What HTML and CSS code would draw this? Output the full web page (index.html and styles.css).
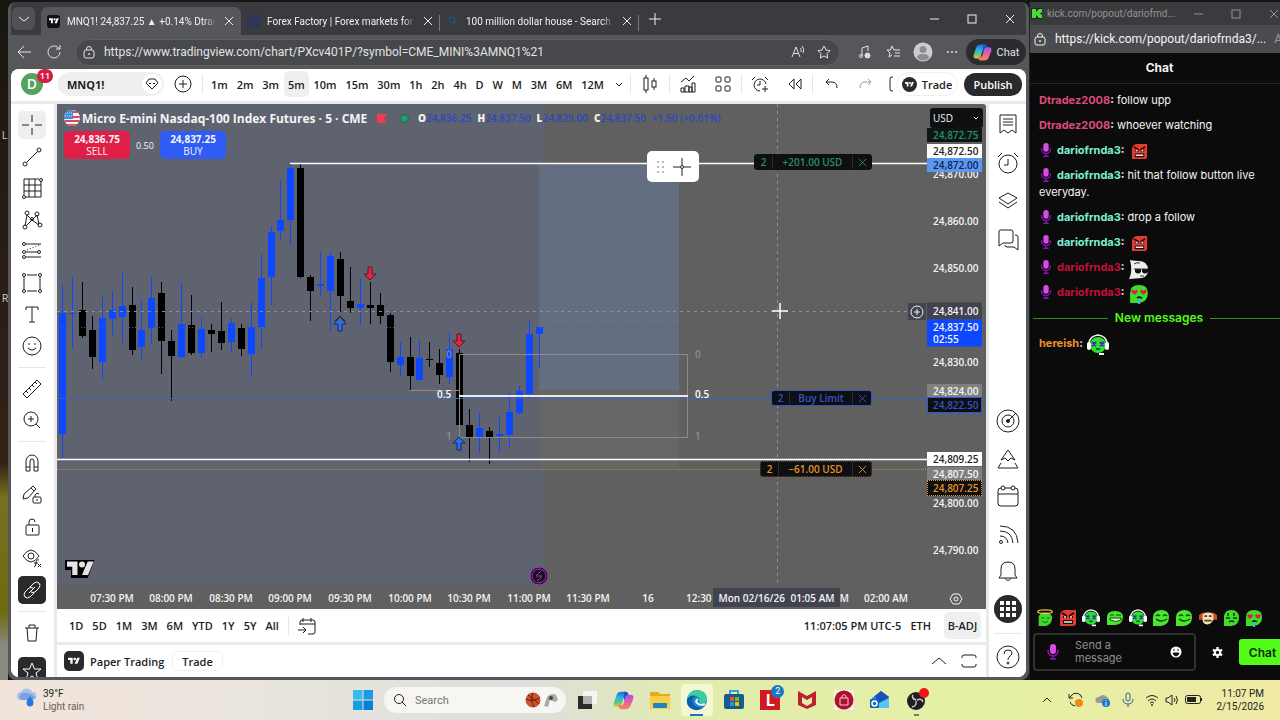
FILE: index.html
```html
<!DOCTYPE html>
<html lang="en">
<head>
  <meta charset="UTF-8">
  <meta name="viewport" content="width=device-width, initial-scale=1.0">
  <title>MNQ1! 24,837.25</title>
  <link rel="stylesheet" href="styles.css">
</head>
<body>

<!-- shared symbols -->
<svg class="symbols" aria-hidden="true">
  <linearGradient id="cool" x1="0" y1="0" x2="0" y2="1"><stop offset="0" stop-color="#2468e0"/><stop offset=".4" stop-color="#2fb4e6"/><stop offset=".7" stop-color="#58c878"/><stop offset="1" stop-color="#f2cf2c"/></linearGradient>
  <linearGradient id="warm" x1="0" y1="0" x2="0" y2="1"><stop offset="0" stop-color="#a05be8"/><stop offset=".5" stop-color="#ea5aa8"/><stop offset="1" stop-color="#f98a52"/></linearGradient>
  <symbol id="tv" viewBox="0 0 36 28"><path d="M14 22H7V11H0V4h14v18zM28 22h-8l7.500-18h8L28 22z"/><circle cx="20" cy="8" r="4"/></symbol>
  <symbol id="close" viewBox="0 0 12 12"><path d="M2 2l8 8M10 2l-8 8"/></symbol>
  <symbol id="lock" viewBox="0 0 14 14"><rect x="2" y="5" width="10" height="8" rx="2"/><path d="M4.500 5V4a2.500 2.500 0 0 1 5 0v1"/><circle cx="7" cy="9" r=".6"/></symbol>
  <symbol id="copilot" viewBox="0 0 24 24">
    <path d="M10 2h4c2 0 3 1 3.500 3l.8 2.500H15c-1.500 0-2.500.8-3 2.500l-2.300 7c-.6 1.600-1.600 2.500-3.200 2.500H4c-3 0-4-2-3-5L4 6c.8-2.800 3-4 6-4z" fill="url(#cool)"/>
    <path d="M14 22h-4c-2 0-3-1-3.500-3l-.5-1.500h3c1.500 0 2.500-.8 3-2.500l2.300-7c.6-1.600 1.600-2.500 3.200-2.500H20c3 0 4 2 3 5l-3 7.500c-.8 2.800-3 4-6 4z" fill="url(#warm)"/>
    <path d="M14 2c2 0 3 1 3.500 3l.3.600c-1.800 0-2.900.6-3.500 2.400L13 12l-1-4 1-6z" fill="#2450c8"/>
  </symbol>
  <symbol id="mic" viewBox="0 0 12 18"><rect x="3" y="1" width="6" height="10" rx="3" fill="#d84be4"/><path d="M1 7v1a5 5 0 0 0 10 0V7M6 13v3M3 16h6" fill="none" stroke="#8a14b4" stroke-width="1.500"/></symbol>
  <symbol id="angry" viewBox="0 0 18 18"><path d="M1 17V6q1-5 6-5h10v13q0 3-3 3z" fill="#e23c32"/><path d="M3 4l5 3M15 4l-5 3" stroke="#200" stroke-width="1.500"/><path d="M4 7h4v2H4zM10 7h4v2h-4zM4 11h10v4H4z" fill="#1a0a0a"/><path d="M5 8h2M11 8h2M5 13h8" stroke="#eee" stroke-width="1.500"/></symbol>
  <symbol id="ghost" viewBox="0 0 20 20"><path d="M0 20q3-6 2-14l-1-5q4 1 9 1 8 0 9 8 0 8-6 9z" fill="#eee"/><path d="M6 10h6v3q-3 3-6 0zM13 10h6v3q-3 3-6 0z" fill="#111"/><path d="M5 10h14M11 17h4M5 5q3-2 6-1" stroke="#333" fill="none"/></symbol>
  <symbol id="drool" viewBox="0 0 18 18"><path d="M1 17V8q0-7 8-7t8 7q0 8-8 9z" fill="#3fdc2a"/><path d="M3 5l2 1 2-1 1 2-3 3-3-3zM11 5l2 1 2-1 1 2-3 3-3-3z" fill="#d8203c"/><path d="M7 12q2-2 5 0v1H7z" fill="#123"/><path d="M8 13h2v5H8z" fill="#38b6e8"/></symbol>
  <symbol id="dizzy" viewBox="0 0 22 22"><circle cx="11" cy="11" r="8" fill="#2de02a"/><path d="M2 9q1-7 9-8 8 1 9 8" fill="none" stroke="#f2f2f2" stroke-width="1.500"/><rect x="0" y="8" width="4" height="8" rx="2" fill="#fff"/><rect x="18" y="8" width="4" height="8" rx="2" fill="#fff"/><path d="M5 8l4 4M9 8l-4 4M13 8l4 4M17 8l-4 4" stroke="#4426b8" stroke-width="2"/><path d="M9 15h4" stroke="#063" stroke-width="2"/><path d="M12 20h5" stroke="#fff" stroke-width="2"/></symbol>
  <symbol id="angel" viewBox="0 0 18 20"><path d="M2 19V9q1-5 7-5t8 5q0 8-7 10z" fill="#3fd92a"/><ellipse cx="9" cy="3" rx="8" ry="2" fill="none" stroke="#f4c64e" stroke-width="1.500"/><path d="M5 10h3M11 10h3M6 14q3 2 6 0" stroke="#0a5a0a" fill="none"/></symbol>
  <symbol id="grin" viewBox="0 0 18 18"><path d="M1 17V8q0-6 8-7 8 0 8 7 0 8-8 9z" fill="#4be52e"/><path d="M4 7q2-2 4 0M11 7q2-2 4 0M4 10q5 4 11 0" stroke="#0a4a0a" stroke-width="1.500" fill="none"/></symbol>
  <symbol id="laugh" viewBox="0 0 18 18"><path d="M1 16V8q0-6 8-6 8 0 8 6 0 7-8 8z" fill="#4be52e"/><path d="M4 6h4M10 6h5" stroke="#0a4a0a"/><path d="M4 9h11v2q-5 3-11 0z" fill="#d8f5d0" stroke="#0a4a0a"/></symbol>
  <symbol id="mask" viewBox="0 0 20 18"><path d="M0 6q3-4 7-3h6q4-1 7 3v5h-4L10 9 4 11H0z" fill="#d8412c"/><path d="M4 5q6-4 12 0v6q-3 6-8 5-4-1-4-5z" fill="#d9edb8"/><path d="M6 6h3v2H6zM11 6h3v2h-3zM6 11h8v2H6z" fill="#a1221c"/></symbol>
  <symbol id="think" viewBox="0 0 18 18"><path d="M2 17V7q1-6 7-6 8 0 8 8 0 7-8 8z" fill="#41dd28"/><path d="M6 4v3M12 4v3M4 9h4M11 9h4M7 13q3-2 5 0" stroke="#063a08" stroke-width="1.500" fill="none"/></symbol>
</svg>

<div class="desktop">
  <div class="workspace">
    <div class="wallpaper"><span>L</span><span>R</span></div>

    <main class="browser">
      <div class="tabstrip">
        <button class="tab-menu" aria-label="Tab actions"><svg width="14" height="14" class="line"><path d="M2 5l5 4 5-4"/></svg></button>
        <div class="tab active">
          <span class="favicon dark"><svg width="10" height="8"><use href="#tv"/></svg></span>
          <span class="tab-title">MNQ1! 24,837.25 ▲ +0.14% Dtradez</span>
          <button aria-label="Close tab"><svg width="12" height="12" class="line"><use href="#close"/></svg></button>
        </div>
        <div class="tab">
          <span class="favicon navy"></span>
          <span class="tab-title">Forex Factory | Forex markets for the</span>
          <button aria-label="Close tab"><svg width="12" height="12" class="line"><use href="#close"/></svg></button>
        </div>
        <div class="tab">
          <span class="favicon"><svg width="12" height="12" class="find"><circle cx="5" cy="5" r="3"/><path d="M7 7l3 3"/></svg></span>
          <span class="tab-title">100 million dollar house - Search</span>
          <button aria-label="Close tab"><svg width="12" height="12" class="line"><use href="#close"/></svg></button>
        </div>
        <button class="new-tab" aria-label="New tab"><svg width="14" height="14" class="line"><path d="M7 1v12M1 7h12"/></svg></button>
        <div class="window-controls">
          <button aria-label="Minimize"><svg width="12" height="12" class="line"><path d="M2 6h9"/></svg></button>
          <button aria-label="Maximize"><svg width="12" height="12" class="line"><rect x="2" y="2" width="8" height="8"/></svg></button>
          <button aria-label="Close"><svg width="12" height="12" class="line"><use href="#close"/></svg></button>
        </div>
      </div>

      <div class="toolbar">
        <button aria-label="Back"><svg width="16" height="16" class="line"><path d="M15 8H2M8 2L2 8l6 6"/></svg></button>
        <button aria-label="Reload"><svg width="16" height="16" class="line"><path d="M14 8a6 6 0 1 1-2-4.500L14 5M14 1v4h-4"/></svg></button>
        <div class="address">
          <svg width="14" height="14" class="line"><use href="#lock"/></svg>
          <input type="text" aria-label="Address" value="https://www.tradingview.com/chart/PXcv401P/?symbol=CME_MINI%3AMNQ1%21">
          <button aria-label="Read aloud"><svg width="16" height="16" class="line"><path d="M2 13L6 3l4 10M3.500 9.500h5M10 4q2 1 1 4M12 2q3 3 1 7"/></svg></button>
          <button aria-label="Add favorite"><svg width="16" height="16" class="line"><path d="M8 2l2 4 4 .6-3 3 .7 4.400L8 12l-3.700 2 .7-4.400-3-3L6 6z"/></svg></button>
        </div>
        <div class="toolbar-icons">
          <button aria-label="Media"><svg width="16" height="16" class="line"><path d="M5 12V4l6-2v5"/><circle cx="4" cy="12" r="1.500"/><circle cx="10.500" cy="11.500" r="2.500" fill="#ddd"/></svg></button>
          <button aria-label="Favorites"><svg width="16" height="16" class="line"><path d="M10 6H8L6 2 4.500 6H1l3 3-1 4 3-2M10 6h4M9 9h5M8 12h6"/></svg></button>
          <button aria-label="Profile"><svg width="20" height="20"><circle cx="10" cy="10" r="9.500" fill="#cbcccd"/><circle cx="10" cy="7.500" r="3.500" fill="#8c8d8f"/><path d="M4 16q0-4 6-4t6 4q-6 5-12 0z" fill="#8c8d8f"/></svg></button>
          <button aria-label="More"><svg width="14" height="14" fill="#ddd"><circle cx="3" cy="7" r="1"/><circle cx="7" cy="7" r="1"/><circle cx="11" cy="7" r="1"/></svg></button>
        </div>
        <button class="copilot"><svg width="19" height="19"><use href="#copilot"/></svg>Chat</button>
      </div>

      <div class="page">
        <header class="tv-header">
          <div class="avatar">D<span class="badge">11</span></div>
          <button class="symbol-search">MNQ1!<span><svg width="16" height="16" class="line"><path d="M5 3h6l3 4-6 6-6-6zM5 7l1 1 1-1M9 7l1 1 1-1"/></svg></span></button>
          <button class="add" aria-label="Compare"><svg width="18" height="18" class="line"><circle cx="9" cy="9" r="8"/><path d="M9 5v8M5 9h8"/></svg></button>
          <nav class="intervals">
            <button>1m</button><button>2m</button><button>3m</button><button class="selected">5m</button><button>10m</button><button>15m</button><button>30m</button><button>1h</button><button>2h</button><button>4h</button><button>D</button><button>W</button><button>M</button><button>3M</button><button>6M</button><button>12M</button>
          </nav>
          <button class="more" aria-label="More intervals"><svg width="10" height="10" class="line"><path d="M2 4l3 3 3-3"/></svg></button>
          <div class="tools">
            <button class="candle-style" aria-label="Candles"><svg width="18" height="20" class="line"><path d="M5 1v3M5 16v3M13 4v3M13 13v3"/><rect x="3" y="4" width="4" height="12"/><rect x="11" y="7" width="4" height="6"/></svg></button>
            <div class="pair">
              <button aria-label="Indicators"><svg width="18" height="18" class="line"><path d="M2 7l5-4 3 3 5-5M2 17v-4h3v4M6 17v-6h4v6M10 17v-5h3v5M13 17V8h3v9H2"/></svg></button>
              <button aria-label="Layouts"><svg width="18" height="18" class="line"><rect x="2" y="2" width="5" height="5" rx="1"/><rect x="11" y="2" width="5" height="5" rx="1"/><rect x="2" y="11" width="5" height="5" rx="1"/><rect x="11" y="11" width="5" height="5" rx="1"/></svg></button>
            </div>
            <div class="pair">
              <button aria-label="Alert"><svg width="18" height="18" class="line"><path d="M15 9a6 6 0 1 0-6 7M9 6v4H6M1 5l3-3M14 2l3 3M14 11v6M11 14h6"/></svg></button>
              <button aria-label="Replay"><svg width="18" height="18" class="line"><path d="M8 4v10L3 9zM15 4v10l-5-5z"/></svg></button>
            </div>
            <div class="pair">
              <button aria-label="Undo"><svg width="16" height="16" class="line"><path d="M6 3L3 6l3 3M3 6h6q5 0 5 6"/></svg></button>
              <button class="faded" aria-label="Redo"><svg width="16" height="16" class="line"><path d="M10 3l3 3-3 3M13 6H7q-5 0-5 6"/></svg></button>
            </div>
          </div>
          <svg width="6" height="16" class="line bracket"><path d="M5 1H4Q2 1 2 3v10q0 2 2 2h1"/></svg>
          <button class="trade"><span><svg width="9" height="7"><use href="#tv"/></svg></span>Trade</button>
          <button class="publish">Publish</button>
        </header>

        <aside class="drawing-bar">
          <div class="group tall">
            <button class="selected" aria-label="Cross"><svg width="22" height="22" class="line"><path d="M11 1v7M11 14v7M1 11h7M14 11h7"/></svg></button>
            <button aria-label="Trend line"><svg width="22" height="22" class="line"><circle cx="4" cy="18" r="2"/><circle cx="18" cy="4" r="2"/><path d="M5.500 16.500l11-11"/></svg></button>
            <button aria-label="Grid"><svg width="22" height="22" class="line"><path d="M3 2h15M20 4v16H4M3 2v16M8 2v18M14 2v18M3 8h17M3 14h17"/><circle cx="20" cy="3" r="1.500"/><circle cx="3" cy="20" r="1.500"/></svg></button>
            <button aria-label="Patterns"><svg width="22" height="22" class="line"><path d="M4 17L6 6l5 5 5-5 2 9M5 17l6-6 7 5"/><circle cx="4" cy="18" r="2"/><circle cx="6" cy="4" r="2"/><circle cx="11" cy="10" r="1.500"/><circle cx="16" cy="5" r="2"/><circle cx="19" cy="16" r="2"/></svg></button>
            <button aria-label="Forecast"><svg width="22" height="22" class="line"><circle cx="3" cy="4" r="1.500"/><path d="M5 4h15M5 12h12M5 17h15"/><circle cx="3" cy="12" r="1.500"/><circle cx="18" cy="12" r="1.500"/><circle cx="3" cy="17" r="1.500"/><path d="M6 10l12-5" stroke-dasharray="1 2"/></svg></button>
            <button aria-label="Rectangle"><svg width="22" height="22" class="line"><path d="M6 3h10M6 19h10M3 5v12M19 5v12"/><circle cx="3" cy="3" r="1.500"/><circle cx="19" cy="3" r="1.500"/><circle cx="3" cy="19" r="1.500"/><circle cx="19" cy="19" r="1.500"/></svg></button>
            <button aria-label="Text"><svg width="22" height="22" class="line"><path d="M5 7V4h12v3M11 4v15M8 19h6"/></svg></button>
            <button aria-label="Icons"><svg width="22" height="22" class="line"><circle cx="11" cy="11" r="9"/><path d="M8 8v2M14 8v2M7 13q4 4 8 0"/></svg></button>
          </div>
          <div class="group two">
            <button aria-label="Measure"><svg width="22" height="22" class="line"><path d="M2 16L16 2l4 4L6 20zM5 13l2 2M8 10l2 2M11 7l2 2M14 4l2 2"/></svg></button>
            <button aria-label="Zoom in"><svg width="22" height="22" class="line"><circle cx="10" cy="10" r="7"/><path d="M15 15l4 4M10 7v6M7 10h6"/></svg></button>
          </div>
          <div class="group five">
            <button aria-label="Magnet"><svg width="22" height="22" class="line"><path d="M5 19V9a6 6 0 0 1 12 0v10h-4V9a2 2 0 0 0-4 0v10zM5 15h4M13 15h4"/></svg></button>
            <button aria-label="Drawing mode"><svg width="22" height="22" class="line"><path d="M2 15l1-5 9-8 3 3-8 9zM10 4l3 3"/><rect x="12" y="13" width="8" height="6" rx="1"/><path d="M14 13v-2q2-3 4-1M16 15v2"/></svg></button>
            <button aria-label="Lock drawings"><svg width="22" height="22" class="line"><rect x="5" y="9" width="13" height="10" rx="1"/><path d="M8 9V6q0-3 3-3t3 3M11.500 12v4"/></svg></button>
            <button aria-label="Hide drawings"><svg width="22" height="22" class="line"><path d="M2 9q8-12 16 0-8 12-16 0z"/><circle cx="10" cy="9" r="3"/><path d="M13 20q2 0 2-4t3-3M13 16h4M17 17l3 3M20 17l-3 3"/></svg></button>
            <button class="dark" aria-label="Link"><svg width="22" height="22" class="line"><path d="M9 8l4-4q3-2 5 0t0 5l-4 4q-2 1-4 0M13 14l-4 4q-3 2-5 0t0-5l4-4q2-1 4 0M8 14l6-6"/></svg></button>
          </div>
          <div class="group last">
            <button aria-label="Remove"><svg width="22" height="22" class="line"><path d="M4 6h14M8 6V3h6v3M6 6l1 13h8l1-13"/></svg></button>
            <button class="dark" aria-label="Favorites bar"><svg width="22" height="22" class="line"><path d="M11 3l2.500 6H20l-5 4 2 7-6-4-6 4 2-7-5-4h6.500z"/></svg></button>
          </div>
        </aside>

        <section class="chart">
          <div class="plot">
            <svg class="drawing" id="plot">
              <rect class="session" x="0" y="0" width="488" height="481"/>
              <rect class="loss-zone" x="482" y="286" width="140" height="79"/>
              <rect class="target-zone" x="482" y="60" width="140" height="226"/>
              <g id="candles"></g>
              <path class="hover-line" d="M0 207.500H855M720.500 0V481"/>
              <path class="last-price" d="M0 223.500H870"/>
              <path class="order-line" d="M0 294.500H870"/>
              <path class="stop-line" d="M0 365.500H870"/>
              <path class="level" d="M233 59.500H870M0 355.500H870"/>
              <path class="range" d="M402.500 250.500H630.500V333.500H402.500zM353 286.500H402"/>
              <path class="middle" d="M402 292H631"/>
              <g class="range-text">
                <text x="389" y="254" class="dim">0</text><text x="638" y="254" class="dim">0</text>
                <text x="380" y="294">0.5</text><text x="638" y="294">0.5</text>
                <text x="389" y="336" class="dim">1</text><text x="638" y="336" class="dim">1</text>
              </g>
              <g class="sell-arrow"><path d="M311 163h4v7h4l-6 6-6-6h4z"/><path d="M400 230h4v7h4l-6 6-6-6h4z"/></g>
              <g class="buy-arrow"><path d="M281 227h4v-7h4l-6-8-6 8h4zM278 217l5-5 5 5"/><path d="M400 346h4v-7h4l-6-6-6 6h4z"/></g>
              <g transform="translate(9,457)"><path d="M0 0h27l-6 16H6V8H0z" fill="#000" stroke="#000" stroke-width="2"/><svg width="27" height="22" y="-3" x="1" fill="#e4e4e6"><use href="#tv"/></svg></g>
              <g class="event"><circle cx="482" cy="472" r="9"/><circle cx="482" cy="472" r="7"/><path d="M484 467l-5 5h6l-5 5"/></g>
              <path class="pointer" d="M723 199v16M715 207h16"/>
            </svg>

            <div class="legend">
              <svg width="16" height="16" viewBox="0 0 16 16"><clipPath id="round"><circle cx="8" cy="8" r="8"/></clipPath><g clip-path="url(#round)"><rect width="16" height="16" fill="#f4f4f4"/><path d="M0 2h16M0 7h16M0 11h16M0 15h16" stroke="#e0485a" stroke-width="2"/><rect width="9" height="9" fill="#3b8ed8"/><path d="M1 3h8M1 6h8" stroke="#cfe6fa" stroke-dasharray="1 1"/></g></svg>
              <h1>Micro E-mini Nasdaq-100 Index Futures · 5 · CME</h1>
              <svg width="11" height="11" class="flag"><path d="M1 1h10L8 5.500l3 4.500H1z" fill="#f23a50"/></svg>
              <svg width="11" height="11" class="dot"><circle cx="5.500" cy="5.500" r="5" fill="#3c6b5c"/><circle cx="5.500" cy="5.500" r="3" fill="#12a679"/></svg>
              <p class="ohlc"><span><b>O</b>24,836.25</span><span><b>H</b>24,837.50</span><span><b>L</b>24,829.00</span><span><b>C</b>24,837.50</span><span>+1.50 (+0.01%)</span></p>
            </div>
            <div class="quotes">
              <button class="sell"><b>24,836.75</b>SELL</button>
              <span>0.50</span>
              <button class="buy"><b>24,837.25</b>BUY</button>
            </div>
            <div class="floating"><svg width="8" height="14" fill="#bbb"><path d="M0 1h2v2H0zM5 1h2v2H5zM0 6h2v2H0zM5 6h2v2H5zM0 11h2v2H0zM5 11h2v2H5z"/></svg><button aria-label="Crosshair"><svg width="18" height="18" class="line"><path d="M9 0v7M9 11v7M0 9h7M11 9h7"/><circle cx="9" cy="9" r="1.500"/></svg></button></div>

            <div class="order profit"><span>2</span><span class="amount">+201.00 USD</span><button aria-label="Close take profit"><svg width="11" height="11" viewBox="0 0 12 12"><use href="#close"/></svg></button></div>
            <div class="order limit"><span>2</span><span class="amount">Buy Limit</span><button aria-label="Cancel order"><svg width="11" height="11" viewBox="0 0 12 12"><use href="#close"/></svg></button></div>
            <div class="order stop"><span>2</span><span class="amount">−61.00 USD</span><button aria-label="Close stop loss"><svg width="11" height="11" viewBox="0 0 12 12"><use href="#close"/></svg></button></div>
            <button class="axis-plus" aria-label="Add order"><svg width="14" height="14" class="line"><circle cx="7" cy="7" r="6"/><path d="M7 4v6M4 7h6"/></svg></button>
          </div>
          <div class="price-axis" id="prices">
            <div class="currency">
              <select aria-label="Currency"><option>USD</option></select>
              <svg width="8" height="8" class="line"><path d="M2 3l2 2 2-2"/></svg>
            </div>
          </div>
          <div class="time-axis" id="times">
            <span class="time-cursor"><span>Mon 02/16/26</span><span>01:05 AM</span></span>
            <button class="axis-settings" aria-label="Axis settings"><svg width="14" height="14" class="line"><path d="M4 2h6l3 5-3 5H4L1 7z"/><circle cx="7" cy="7" r="2"/></svg></button>
          </div>
        </section>

        <div class="range-bar">
          <button>1D</button><button>5D</button><button>1M</button><button>3M</button><button>6M</button><button>YTD</button><button>1Y</button><button>5Y</button><button>All</button>
          <button class="goto" aria-label="Go to date"><svg width="18" height="18" class="line"><path d="M2 8V5q0-2 2-2h11q2 0 2 2v10q0 2-2 2h-5M2 7h15M5 1v4M13 1v4M0 13h8M5 10l3 3-3 3"/></svg></button>
          <span class="clock">11:07:05 PM UTC-5</span>
          <button class="eth">ETH</button>
          <button class="adj">B-ADJ</button>
        </div>

        <footer class="account">
          <span class="favicon big"><svg width="12" height="10"><use href="#tv"/></svg></span>
          <span>Paper Trading</span>
          <button class="account-trade">Trade</button>
          <button class="up" aria-label="Open panel"><svg width="16" height="16" class="line"><path d="M1 11l7-6 7 6"/></svg></button>
          <button aria-label="Maximize panel"><svg width="16" height="16" class="line"><path d="M1 5V4q0-2 2-2h10q2 0 2 2v1M1 11v1q0 2 2 2h10q2 0 2-2v-1"/></svg></button>
        </footer>

        <aside class="widget-bar">
          <div class="group">
            <button aria-label="Watchlist"><svg width="22" height="22" class="line"><path d="M3 2h16v18l-4-3-4 3-4-3-4 3zM6 6h10M6 9h10M6 12h10"/></svg></button>
            <button aria-label="Alerts"><svg width="22" height="22" class="line"><circle cx="11" cy="12" r="9"/><path d="M11 7v6H7M1 5l4-4M17 1l4 4"/></svg></button>
            <button aria-label="Object tree"><svg width="22" height="22" class="line"><path d="M11 3l9 5-9 6-9-6zM2 12l9 6 9-6"/></svg></button>
            <button aria-label="Chats"><svg width="22" height="22" class="line"><path d="M3 1h11q2 0 2 2v9q0 2-2 2H6l-4 3V3q0-2 1-2zM18 6q3 0 3 2v13l-4-3h-7q-2 0-2-2"/></svg></button>
          </div>
          <div class="group lower">
            <button aria-label="Screener"><svg width="24" height="24" class="line"><circle cx="12" cy="12" r="11"/><circle cx="12" cy="12" r="6"/><circle cx="12" cy="12" r="1.500" fill="#222"/><path d="M12 12l8-8"/></svg></button>
            <button aria-label="Pine"><svg width="22" height="22" class="line"><path d="M4 12l7-10 7 10-4-2-3 3-3-3zM4 15l-3 5h20l-3-5"/></svg></button>
            <button aria-label="Calendar"><svg width="22" height="22" class="line"><rect x="1" y="3" width="20" height="18" rx="3"/><path d="M1 9h20"/><circle cx="6" cy="3" r="2" fill="#fff"/><circle cx="16" cy="3" r="2" fill="#fff"/></svg></button>
            <button aria-label="News"><svg width="22" height="22" class="line"><path d="M3 3q17 0 18 17M3 8q12 0 13 12M3 13q7 0 8 7"/><circle cx="4" cy="19" r="1.500"/></svg></button>
            <button aria-label="Notifications"><svg width="22" height="22" class="line"><path d="M2 18l2-3V9q0-7 7-7t7 7v6l2 3zM8 18q3 5 6 0"/></svg></button>
            <button class="apps" aria-label="Products"><svg width="16" height="16" fill="#fff"><path d="M0 0h4v4H0zM6 0h4v4H6zM12 0h4v4h-4zM0 6h4v4H0zM6 6h4v4H6zM12 6h4v4h-4zM0 12h4v4H0zM6 12h4v4H6zM12 12h4v4h-4z"/></svg></button>
          </div>
          <button class="help" aria-label="Help"><svg width="24" height="24" class="line"><circle cx="12" cy="12" r="11"/><path d="M8 9q0-4 4-4t4 3q0 2-3 4-1 1-1 3"/><circle cx="12" cy="18" r="1"/></svg></button>
        </aside>
      </div>
    </main>

    <section class="kick">
      <div class="kick-title">
        <span class="kick-logo"><svg width="11" height="11" fill="#4fd83c"><path d="M1 1h4v3l3-3h3v3L9 5.500 11 7v3H8L5 7v3H1z"/></svg></span>
        <span>kick.com/popout/dariofrnd...</span>
        <div class="kick-controls">
          <button aria-label="Minimize"><svg width="12" height="12" class="line"><path d="M2 6h9"/></svg></button>
          <button aria-label="Maximize"><svg width="12" height="12" class="line"><rect x="2" y="2" width="8" height="8"/></svg></button>
          <button aria-label="Close"><svg width="12" height="12" class="line"><use href="#close"/></svg></button>
        </div>
      </div>
      <div class="kick-address"><svg width="14" height="14" class="line"><use href="#lock"/></svg><span>https://kick.com/popout/dariofrnda3/...</span><i>A</i></div>
      <h2>Chat</h2>
      <div class="messages">
        <p><b class="pink">Dtradez2008</b><b>:</b> follow upp</p>
        <p><b class="pink">Dtradez2008</b><b>:</b> whoever watching</p>
        <p><svg class="mic"><use href="#mic"/></svg><b class="mint">dariofrnda3</b><b>:</b> <svg class="emote"><use href="#angry"/></svg></p>
        <p><svg class="mic"><use href="#mic"/></svg><b class="mint">dariofrnda3</b><b>:</b> hit that follow button live everyday.</p>
        <p><svg class="mic"><use href="#mic"/></svg><b class="mint">dariofrnda3</b><b>:</b> drop a follow</p>
        <p><svg class="mic"><use href="#mic"/></svg><b class="mint">dariofrnda3</b><b>:</b> <svg class="emote"><use href="#angry"/></svg></p>
        <p><svg class="mic"><use href="#mic"/></svg><b class="red">dariofrnda3</b><b>:</b> <svg class="emote big"><use href="#ghost"/></svg></p>
        <p><svg class="mic"><use href="#mic"/></svg><b class="red">dariofrnda3</b><b>:</b> <svg class="emote big"><use href="#drool"/></svg></p>
        <div class="divider">New messages</div>
        <p><b class="orange">hereish</b><b>:</b> <svg class="emote huge"><use href="#dizzy"/></svg></p>
      </div>
      <div class="quick-emotes">
        <button aria-label="Angel"><svg><use href="#angel"/></svg></button>
        <button aria-label="Angry"><svg><use href="#angry"/></svg></button>
        <button aria-label="Dizzy"><svg><use href="#dizzy"/></svg></button>
        <button aria-label="Laugh"><svg><use href="#laugh"/></svg></button>
        <button aria-label="Vibe"><svg><use href="#dizzy"/></svg></button>
        <button aria-label="Smile"><svg><use href="#grin"/></svg></button>
        <button aria-label="Happy"><svg><use href="#grin"/></svg></button>
        <button aria-label="Mask"><svg><use href="#mask"/></svg></button>
        <button aria-label="Think"><svg><use href="#think"/></svg></button>
        <button aria-label="Drool"><svg><use href="#drool"/></svg></button>
      </div>
      <div class="composer">
        <div class="message-box">
          <svg class="mic"><use href="#mic"/></svg>
          <textarea rows="2" aria-label="Message" placeholder="Send a message"></textarea>
          <button aria-label="Emotes"><svg width="12" height="12"><circle cx="6" cy="6" r="5.500" fill="#fff"/><path d="M3 4h2M7 4h2M3 7h6q-1 3-3 3T3 7z" stroke="#111" fill="#111"/></svg></button>
        </div>
        <button class="gear" aria-label="Settings"><svg width="11" height="11" viewBox="0 0 12 12"><path d="M6 0v12M1 3l10 6M11 3L1 9" stroke="#fff" stroke-width="2.500"/><circle cx="6" cy="6" r="4" fill="#fff"/><circle cx="6" cy="6" r="1.800" fill="#111"/></svg></button>
        <button class="send">Chat</button>
      </div>
    </section>
  </div>

  <div class="taskbar">
    <div class="weather">
      <svg width="22" height="22"><path d="M5 13a4 4 0 0 1 0-8 6 6 0 0 1 11 0 4 4 0 0 1 1 8z" fill="#a9c2ee"/><path d="M5 13a4 4 0 0 1 1-7q8-1 13 4-1 3-3 3z" fill="#7f9fe0"/><path d="M14 9q5 6 3 9-3 3-6 0-2-3 3-9z" fill="#2476e8"/></svg>
      <p>39°F<br><span>Light rain</span></p>
    </div>
    <div class="dock">
      <button aria-label="Start"><svg width="20" height="20"><path d="M0 0h9.500v9.500H0z" fill="#36bdf0"/><path d="M10.500 0H20v9.500h-9.500zM0 10.500h9.500V20H0z" fill="#1b9be2"/><path d="M10.500 10.500H20V20h-9.500z" fill="#0a7fd0"/></svg></button>
      <label class="search">
        <svg width="14" height="14" class="line"><circle cx="6" cy="6" r="4.500"/><path d="M9 9l4 4"/></svg>
        <input type="text" placeholder="Search" aria-label="Search">
        <svg width="34" height="18"><circle cx="8" cy="9" r="7.500" fill="#d0522c"/><path d="M1 8q8 4 14-2M8 2q-3 7 1 14M3 4q6 4 11 9" stroke="#59200f" fill="none"/><path d="M19 15l3-9q4-5 9-2l2 5-3 2-5-2-2 7z" fill="#a8a9ab"/><circle cx="26" cy="7" r="2" fill="#444"/></svg>
      </label>
      <div class="apps">
        <button aria-label="Task view"><svg width="20" height="20"><rect x="6" y="1" width="14" height="13" fill="#f4f4f2"/><rect x="1" y="6" width="14" height="13" fill="#2b2b2b"/><rect x="6" y="6" width="9" height="8" fill="#b4b5b3"/></svg></button>
        <button aria-label="Copilot"><svg width="21" height="21"><use href="#copilot"/></svg></button>
        <button aria-label="Explorer"><svg width="22" height="20"><path d="M1 2h8l2 2h10v15H1z" fill="#e9a820"/><path d="M1 6h20v12q0 1-1 1H2q-1 0-1-1z" fill="#fbcf45"/><rect x="4" y="13" width="14" height="5" rx="1" fill="#1d82c8"/></svg></button>
        <button class="open" aria-label="Edge"><svg width="22" height="22"><circle cx="11" cy="11" r="10" fill="#1d86cf"/><path d="M1 10Q3 1 12 1q9 1 9 9 0 4-5 4-3 0-3-2 2-4-3-5-6-1-9 3z" fill="#38cf98"/><path d="M1 10q4-5 9-3-5 2-3 7 3 6 11 4-6 5-12 2T1 10z" fill="#0d5eaa"/><path d="M12 10q-3 2-1 4 3 3 8 1" fill="none" stroke="#eefaff" stroke-width="2"/></svg></button>
        <button aria-label="Store"><svg width="20" height="20"><path d="M6 5V1h8v4" fill="none" stroke="#37a0dc" stroke-width="2"/><rect y="4" width="20" height="15" rx="2" fill="#175a91"/><path d="M6 7h4v4H6z" fill="#f25022"/><path d="M11 7h4v4h-4z" fill="#7fba00"/><path d="M6 12h4v4H6z" fill="#00a4ef"/><path d="M11 12h4v4h-4z" fill="#ffb900"/></svg></button>
        <button aria-label="Lenovo" class="lenovo">L<span>2</span></button>
        <button aria-label="McAfee"><svg width="20" height="20"><path d="M1 1l9 5 9-5v14l-9 4-9-4zM5 7v6l5 3 5-3V7l-5 3z" fill="#c0202c" fill-rule="evenodd"/></svg></button>
        <button aria-label="Shop"><svg width="20" height="20"><rect width="20" height="20" fill="#f4f1e0"/><circle cx="10" cy="10" r="9.500" fill="#b01030"/><path d="M6 8h8v7H6zM8 8V6q2-3 4 0v2" stroke="#f3c4cc" fill="none"/></svg></button>
        <button aria-label="Outlook"><svg width="20" height="20"><path d="M2 8l9-7 8 6v11H4z" fill="#2388e8"/><path d="M5 6l6-5 8 6-9 8z" fill="#1b4fb8"/><path d="M7 14l12-6v10H8z" fill="#56c5f5"/><rect y="9" width="9" height="9" rx="1" fill="#1464bc"/><circle cx="4.500" cy="13.500" r="2.500" fill="none" stroke="#fff" stroke-width="1.500"/></svg></button>
        <button class="obs" aria-label="OBS"><svg width="24" height="24"><circle cx="11" cy="13" r="9" fill="#1f1f20"/><path d="M11 12q-5-2-3-5M12 12q5-2 6 2M11 13q1 5-4 6" stroke="#c9c9c9" stroke-width="1.500" fill="none"/><circle cx="19" cy="5" r="5" fill="#f21616"/></svg></button>
      </div>
    </div>
    <div class="tray">
      <button aria-label="Hidden icons"><svg width="10" height="10" class="line"><path d="M1 7l4-4 4 4"/></svg></button>
      <svg width="16" height="16" class="line"><path d="M14 6A6 6 0 0 0 3 4L1 6M1 2v4h4M2 10a6 6 0 0 0 5 4"/><circle cx="11" cy="11" r="4" fill="#ef8a17" stroke="none"/></svg>
      <svg width="16" height="16"><path d="M3 11a3 3 0 0 1 1-6q4-4 8 0 4 3 0 6z" fill="#989a98"/><circle cx="11" cy="11" r="4" fill="#1679cf"/><path d="M11 10v4M11 8v1" stroke="#fff"/></svg>
      <svg width="12" height="16" class="line blue"><rect x="4" y="1" width="4" height="8" rx="2"/><path d="M1 7q0 5 5 5t5-5M6 12v3"/></svg>
      <div class="status">
        <svg width="14" height="14" class="line"><path d="M1 5q6-5 12 0M3 8q4-4 8 0M5 10q2-2 4 0"/><circle cx="7" cy="12" r=".6"/></svg>
        <svg width="14" height="14" class="line"><path d="M1 5h2l4-3v10L3 9H1zM9 5q2 2 0 4M11 3q3 4 0 8"/></svg>
        <svg width="18" height="10"><rect x=".5" y=".5" width="15" height="8" rx="2" fill="none" stroke="#222"/><path d="M2 2h9v5H2zM16 3h1v3h-1z" fill="#222"/></svg>
      </div>
      <p>11:07 PM<br>2/15/2026</p>
    </div>
  </div>
</div>

<script src="chart.js"></script>
</body>
</html>
```
FILE: chart.js
```js
// wick top, body top, body bottom, wick bottom, up?
const candles = [
  [182, 209, 330, 354, 1], [173, 209, 210, 244, 1], [178, 206, 232, 234, 0], [212, 226, 253, 265, 0],
  [192, 214, 258, 276, 1], [187, 206, 215, 231, 1], [169, 202, 213, 239, 1], [183, 201, 246, 251, 0],
  [196, 226, 243, 256, 1], [173, 194, 224, 240, 1], [178, 189, 237, 270, 0], [226, 237, 252, 297, 0],
  [178, 220, 253, 254, 1], [191, 221, 249, 251, 0], [213, 225, 249, 254, 1], [220, 226, 230, 248, 0],
  [198, 227, 239, 246, 0], [214, 219, 238, 248, 1], [220, 224, 245, 252, 0], [198, 223, 250, 273, 1],
  [150, 174, 223, 245, 1], [122, 128, 173, 201, 1], [76, 116, 127, 137, 1], [60, 64, 116, 141, 1],
  [59, 64, 173, 174, 0], [171, 173, 187, 217, 0], [148, 180, 182, 192, 1], [148, 152, 187, 227, 1],
  [148, 155, 192, 208, 0], [163, 197, 204, 209, 0], [175, 200, 204, 220, 1], [178, 201, 204, 220, 0],
  [189, 201, 212, 220, 0], [209, 211, 258, 268, 0], [238, 253, 261, 272, 1], [233, 253, 272, 287, 0],
  [236, 254, 276, 277, 1], [238, 255, 256, 263, 0], [245, 259, 271, 280, 0], [228, 245, 273, 280, 1],
  [245, 249, 321, 322, 0], [305, 321, 333, 358, 0], [309, 324, 333, 349, 1], [323, 327, 334, 360, 0],
  [313, 330, 332, 348, 1], [289, 308, 331, 343, 1], [282, 287, 309, 311, 1], [216, 230, 290, 294, 1],
  [223, 223, 230, 264, 1]
];

const prices = [
  [31, '24,872.75', 'tag green'], [70, '24,870.00', ''], [47, '24,872.50', 'tag white'], [61, '24,872.00', 'tag sky'],
  [117, '24,860.00', ''], [164, '24,850.00', ''], [207, '24,841.00', 'tag cursor'],
  [258, '24,830.00', ''], [287, '24,824.00', 'tag grey'], [301, '24,822.50', 'tag blue'],
  [355, '24,809.25', 'tag white'], [370, '24,807.50', 'tag grey'], [384, '24,807.25', 'tag orange'],
  [399, '24,800.00', ''], [446, '24,790.00', '']
];

const times = [
  [55, '07:30 PM'], [114, '08:00 PM'], [174, '08:30 PM'], [233, '09:00 PM'], [293, '09:30 PM'],
  [353, '10:00 PM'], [412, '10:30 PM'], [472, '11:00 PM'], [531, '11:30 PM'], [591, '16'],
  [651, '12:30 AM'], [770, '01:30 AM'], [829, '02:00 AM']
];

const step = 9.93;
let shapes = '';
candles.forEach(([high, top, bottom, low, up], i) => {
  const x = Math.round(5 + i * step);
  const color = up ? '#0d47ff' : '#000';
  shapes += `<rect x="${x}" y="${high}" width="1" height="${low - high}" fill="${color}"/>`;
  shapes += `<rect x="${x - 3}" y="${top}" width="7" height="${bottom - top}" fill="${color}"/>`;
});
document.getElementById('candles').innerHTML = shapes;

const priceAxis = document.getElementById('prices');
prices.forEach(([y, text, type]) => {
  priceAxis.insertAdjacentHTML('beforeend', `<span class="price ${type}" style="top:${y}px">${text}</span>`);
});
priceAxis.insertAdjacentHTML('beforeend', '<span class="price tag last" style="top:229px">24,837.50<br>02:55</span>');

const timeAxis = document.getElementById('times');
times.forEach(([x, text]) => {
  timeAxis.insertAdjacentHTML('afterbegin', `<span class="time" style="left:${x}px">${text}</span>`);
});
```
FILE: styles.css
```css
* {
  box-sizing: border-box;
}
body {
  margin: 0;
  font-family: "Segoe UI", Roboto, sans-serif;
  font-size: 11px;
  overflow: hidden;
}
button, input, textarea, select {
  font: inherit;
  color: inherit;
  border: none;
  background: none;
  padding: 0;
  margin: 0;
}
button {
  cursor: pointer;
  display: flex;
  align-items: center;
  justify-content: center;
  flex-shrink: 0;
}
svg {
  flex-shrink: 0;
}
p, h1, h2 {
  margin: 0;
}
.symbols {
  position: absolute;
  width: 0;
  height: 0;
}
.line {
  fill: none;
  stroke: currentColor;
  stroke-width: 1;
}
.desktop {
  height: 100vh;
  display: flex;
  flex-direction: column;
  background: #171711;
}
.workspace {
  flex: 1;
  min-height: 0;
  display: flex;
  padding-top: 2px;
}
.wallpaper {
  width: 8px;
  padding: 126px 0 0 2px;
  display: flex;
  flex-direction: column;
  gap: 148px;
  color: #ccc;
  font-size: 10px;
  line-height: 15px;
  background: linear-gradient(#17170f, #2a1d16 40%, #302216 68%, #77701d 73%, #6d6b12 90%, #888a80 95%);
}

/* browser window */
.browser {
  flex: 1;
  min-width: 0;
  display: flex;
  flex-direction: column;
  background: #56575a;
  border: solid #56575a;
  border-width: 0 3px 3px;
  border-radius: 8px;
  overflow: hidden;
}
.tabstrip {
  height: 33px;
  margin: 0 -3px;
  padding-left: 4px;
  display: flex;
  align-items: center;
  background: #3a3b3e;
  color: #f0f0f0;
}
.tab-menu {
  width: 23px;
  height: 23px;
  margin-right: 6px;
  border-radius: 6px;
  background: #505154;
}
.tab {
  width: 199px;
  height: 28px;
  padding: 0 6px;
  display: flex;
  align-items: center;
  align-self: flex-end;
  gap: 7px;
  background: linear-gradient(#77787b, #77787b) right 8px / 1px 16px no-repeat;
}
.tab.active {
  width: 200px;
  background: #56575a;
  border-radius: 7px 7px 0 0;
}
.tab-title {
  flex: 1;
  overflow: hidden;
  white-space: nowrap;
  font-size: 10px;
  mask-image: linear-gradient(90deg, #000 92%, transparent);
}
.favicon {
  width: 13px;
  height: 13px;
  display: flex;
  align-items: center;
  justify-content: center;
  border-radius: 3px;
  fill: #fff;
}
.favicon.dark {
  background: #101114;
}
.favicon.navy {
  background: #2f3557;
}
.find {
  fill: none;
  stroke: #1f5a9e;
}
.favicon.big {
  width: 20px;
  height: 20px;
  background: #2a2a2c;
  border-radius: 5px;
}
.new-tab {
  width: 31px;
}
.window-controls {
  margin-left: auto;
  display: flex;
}
.window-controls button {
  width: 38px;
}
.toolbar {
  height: 34px;
  display: flex;
  align-items: center;
  color: #e2e2e3;
}
.toolbar > button {
  width: 26px;
}
.toolbar > button + button {
  margin-left: 4px;
}
.address {
  flex: 1;
  height: 27px;
  margin: 0 10px 0 8px;
  padding: 0 6px;
  display: flex;
  align-items: center;
  gap: 8px;
  border: 1px solid #606164;
  border-radius: 14px;
  background: #47484b;
}
.address input {
  flex: 1;
  font-size: 12px;
}
.address button {
  width: 18px;
}
.toolbar-icons {
  display: flex;
}
.toolbar-icons button {
  width: 29px;
}
.toolbar > .copilot {
  width: 60px;
  height: 26px;
  gap: 5px;
  border-radius: 13px;
  background: #2b2c2f;
}

/* trading page */
.page {
  flex: 1;
  min-height: 0;
  display: grid;
  grid-template-columns: 43px minmax(0, 1fr) 37px;
  grid-template-rows: 32px minmax(0, 1fr) 33px 32px;
  gap: 3px;
  grid-template-areas: "head head head" "draw chart side" "draw range side" "draw account side";
  background: #e9eaec;
  border-radius: 8px;
  overflow: hidden;
  color: #1d1e21;
  font-family: "Trebuchet MS", "Open Sans", sans-serif;
  font-weight: 600;
}
.tv-header {
  grid-area: head;
  display: flex;
  align-items: center;
  padding: 0 4px 2px 10px;
  background: #fff;
}
.avatar {
  width: 22px;
  height: 22px;
  margin-right: 15px;
  border-radius: 50%;
  background: #56a25c;
  color: #fff;
  font-size: 14px;
  line-height: 22px;
  text-align: center;
  position: relative;
}
.badge {
  position: absolute;
  left: 16px;
  top: -4px;
  width: 16px;
  height: 14px;
  border-radius: 7px;
  background: #d81b45;
  font-size: 9px;
  line-height: 14px;
}
.symbol-search {
  width: 106px;
  height: 24px;
  padding: 0 2px 0 9px;
  justify-content: space-between;
  border-radius: 12px;
  background: #efeff0;
  font-weight: 700;
}
.symbol-search span {
  width: 20px;
  height: 20px;
  border-radius: 50%;
  background: #fff;
  display: grid;
  place-items: center;
}
.add {
  width: 39px;
  border-right: 1px solid #e6e6e8;
  height: 20px;
}
.intervals {
  width: 405px;
  padding-left: 4px;
  display: flex;
  justify-content: space-between;
}
.intervals button {
  height: 26px;
  padding: 0 4px;
  border-radius: 5px;
}
.intervals .selected {
  background: #efeff0;
}
.more {
  width: 23px;
  height: 20px;
  border-right: 1px solid #e6e6e8;
}
.tools {
  flex: 1;
  display: flex;
}
.candle-style {
  width: 39px;
  border-right: 1px solid #e6e6e8;
}
.pair {
  width: 71px;
  display: flex;
  justify-content: space-around;
}
.pair + .pair {
  border-left: 1px solid #e6e6e8;
}
.faded {
  color: #999;
}
.trade {
  width: 62px;
  height: 24px;
  margin: 0 6px 0 2px;
  gap: 5px;
  border: 1px solid #f0f0f1;
  border-radius: 12px;
}
.trade span {
  width: 15px;
  height: 15px;
  border-radius: 50%;
  background: #2a2a2c;
  fill: #fff;
  display: grid;
  place-items: center;
}
.publish {
  width: 58px;
  height: 23px;
  border-radius: 12px;
  background: #2a2a2c;
  color: #fff;
}
.drawing-bar {
  grid-area: draw;
  padding: 7px 1px 0 0;
  display: flex;
  flex-direction: column;
  align-items: center;
  overflow: hidden;
  background: #fff;
}
.group {
  display: flex;
  flex-direction: column;
  justify-content: space-between;
  flex-shrink: 0;
}
.drawing-bar button {
  width: 28px;
  height: 28px;
  border-radius: 5px;
}
.drawing-bar .group + .group {
  margin-top: 7px;
  padding-top: 7px;
  border-top: 1px solid #e6e6e8;
}
.tall {
  height: 249px;
}
.two {
  height: 67px;
}
.five {
  height: 163px;
}
.last {
  gap: 10px;
}
.drawing-bar .selected {
  background: #efeff0;
}
.drawing-bar .dark {
  background: #2a2a2c;
  color: #fff;
}
.widget-bar {
  grid-area: side;
  padding: 4px 0;
  display: flex;
  flex-direction: column;
  align-items: center;
  background: #fff;
}
.widget-bar .group {
  height: 148px;
}
.widget-bar .lower {
  height: 220px;
  margin-top: auto;
}
.widget-bar button {
  width: 28px;
  height: 32px;
}
.widget-bar .apps {
  height: 28px;
  margin: 2px 0;
  border-radius: 50%;
  background: #2a2a2c;
}
.widget-bar .help {
  margin-top: 8px;
  padding-top: 7px;
  height: 40px;
  border-top: 1px solid #e6e6e8;
}

/* chart */
.chart {
  grid-area: chart;
  display: grid;
  grid-template-columns: minmax(0, 1fr) 59px;
  grid-template-rows: minmax(0, 1fr) 24px;
  margin-bottom: -3px;
  background: #606060;
  border-radius: 3px 3px 0 0;
  color: #f4f4f5;
  font-size: 10px;
}
.plot {
  position: relative;
  overflow: hidden;
}
.drawing {
  position: absolute;
  width: 100%;
  height: 100%;
  fill: none;
}
.session {
  fill: #5f6370;
}
.target-zone {
  fill: #636f80;
}
.loss-zone {
  fill: #666;
}
.hover-line {
  stroke: #8e9096;
  stroke-dasharray: 3 4;
}
.last-price {
  stroke: #4a5da0;
  stroke-dasharray: 1 2;
}
.order-line {
  stroke: #4560ae;
}
.stop-line {
  stroke: #c08a35;
  stroke-dasharray: 1 1;
}
.level {
  stroke: #fff;
  stroke-width: 1.5;
}
.range {
  stroke: #8b8b8c;
}
.middle {
  stroke: #e8e9f2;
  stroke-width: 2;
}
.range-text {
  fill: #fff;
}
.range-text .dim {
  fill: #8b8b90;
}
.sell-arrow {
  fill: #e02546;
  stroke: #5c1522;
}
.buy-arrow {
  fill: #2c6df5;
  stroke: #102a66;
}
.event {
  fill: #1b0f20;
  stroke: #9a3cba;
}
.pointer {
  stroke: #fff;
  stroke-width: 1.5;
}
.legend {
  position: relative;
  display: flex;
  align-items: center;
  height: 20px;
  margin: 4px 0 0 7px;
  white-space: nowrap;
}
.legend h1 {
  margin-left: 2px;
  width: 294px;
  font-size: 12px;
  font-weight: 700;
}
.flag {
  margin-right: 12px;
}
.dot {
  margin-right: 8px;
}
.ohlc {
  display: flex;
  gap: 6px;
  color: #2a48bd;
}
.ohlc b {
  color: #f4f4f5;
}
.quotes {
  position: relative;
  display: flex;
  align-items: center;
  margin: 3px 0 0 7px;
  font-weight: 400;
}
.quotes button {
  width: 66px;
  height: 28px;
  flex-direction: column;
  border-radius: 5px;
  line-height: 12px;
}
.quotes > span {
  width: 30px;
  text-align: center;
  font-size: 9px;
}
.sell {
  background: #e01f49;
}
.buy {
  background: #2f5cf5;
}
.floating {
  position: absolute;
  left: 590px;
  top: 47px;
  width: 52px;
  height: 31px;
  padding-left: 2px;
  display: flex;
  align-items: center;
  justify-content: space-evenly;
  border-radius: 5px;
  background: #fff;
  color: #222;
}
.order {
  position: absolute;
  right: 55px;
  height: 16px;
  display: flex;
  align-items: stretch;
  border: 1px solid;
  border-radius: 3px;
  background: #0e0f11;
  line-height: 14px;
}
.order > * {
  width: 17px;
  text-align: center;
}
.order > .amount {
  width: 81px;
  border: solid #2b2c2f;
  border-width: 0 1px;
}
.order svg {
  stroke: currentColor;
}
.order button {
  width: 18px;
}
.profit {
  top: 50px;
  color: #26916f;
  border-color: #0e0f11;
}
.limit {
  top: 286px;
  color: #3655c2;
}
.limit > .amount {
  width: 64px;
}
.stop {
  top: 357px;
  color: #e2952c;
  border-color: #6b4a1c;
  border-style: dotted;
}
.stop > .amount {
  width: 75px;
}
.axis-plus {
  position: absolute;
  right: 1px;
  top: 199px;
  width: 18px;
  height: 17px;
  background: #41434f;
}
.price-axis {
  position: relative;
}
.currency {
  position: relative;
  z-index: 1;
  width: 53px;
  margin: 4px 0 0 3px;
}
.currency select {
  appearance: none;
  width: 100%;
  height: 20px;
  padding-left: 3px;
  border-radius: 3px;
  background: #0e0f11;
  font-weight: 400;
}
.currency svg {
  position: absolute;
  right: 3px;
  top: 6px;
  pointer-events: none;
}
.price {
  position: absolute;
  left: 0;
  width: 55px;
  padding-left: 6px;
  line-height: 14px;
  transform: translateY(-50%);
}
.green {
  background: #0e1512;
  color: #26916f;
}
.white {
  background: #fff;
  color: #222;
}
.sky {
  background: #5b98f2;
  color: #10234a;
}
.cursor {
  background: #41434f;
  line-height: 17px;
}
.price.grey {
  background: #808080;
}
.blue.tag {
  background: #0e0f11;
  color: #3655c2;
  border: 1px solid #2c55e8;
}
.orange.tag {
  background: #0e0f11;
  color: #e2952c;
  border: 1px dotted #e2952c;
}
.tag.blue, .tag.orange {
  padding-left: 5px;
}
.price.last {
  background: #0d47ff;
  line-height: 12px;
  padding-top: 1px;
  padding-bottom: 2px;
}
.time-axis {
  grid-column: 1 / 3;
  position: relative;
  line-height: 27px;
}
.time {
  position: absolute;
  transform: translateX(-50%);
}
.time-cursor {
  position: absolute;
  left: 656px;
  top: 3px;
  width: 127px;
  height: 19px;
  line-height: 21px;
  display: flex;
  justify-content: space-evenly;
  background: #41434f;
}
.axis-settings {
  position: absolute;
  right: 23px;
  top: 7px;
}
.range-bar {
  grid-area: range;
  display: flex;
  align-items: center;
  gap: 9px;
  padding: 0 5px 0 12px;
  background: #fff;
}
.range-bar .goto {
  padding-left: 9px;
  border-left: 1px solid #e6e6e8;
}
.clock {
  margin-left: auto;
}
.range-bar .adj {
  width: 37px;
  height: 27px;
  margin-left: 4px;
  border-radius: 5px;
  background: #efeff0;
}
.account {
  grid-area: account;
  display: flex;
  align-items: center;
  padding: 0 9px 0 7px;
  gap: 6px;
  background: #fff;
}
.account-trade {
  height: 20px;
  padding: 0 9px;
  margin-left: 2px;
  border: 1px solid #f0f0f1;
  border-radius: 5px;
}
.account .up {
  margin-left: auto;
  margin-right: 8px;
}

/* chat window */
.kick {
  width: 251px;
  display: flex;
  flex-direction: column;
  border-left: 1px solid #222;
  overflow: hidden;
  background: #0b0b0c;
  color: #f5f5f5;
  font-family: Inter, sans-serif;
}
.kick-title, .kick-address {
  display: flex;
  align-items: center;
  gap: 5px;
  padding-left: 1px;
  white-space: nowrap;
  font-family: "Segoe UI", Roboto, sans-serif;
}
.kick-title {
  height: 23px;
  background: #3a3b3e;
  color: #939496;
  font-size: 10px;
}
.kick-logo {
  width: 11px;
  height: 11px;
  display: flex;
  background: #14301a;
}
.kick-controls {
  margin-left: auto;
  display: flex;
  gap: 26px;
}
.kick-address {
  height: 28px;
  padding-left: 3px;
  gap: 8px;
  background: #4a4b4e;
  font-size: 12px;
}
.kick-address i {
  margin-left: auto;
  font-style: normal;
  color: #999;
}
.kick h2 {
  padding: 0 0 0 9px;
  border-bottom: 1px solid #252627;
  font-size: 12px;
  font-weight: 700;
  line-height: 30px;
  text-align: center;
}
.messages {
  flex: 1;
  padding-top: 4px;
  line-height: 17px;
}
.messages p {
  padding: 4px 9px;
}
.messages .mic {
  width: 12px;
  height: 16px;
  margin: -4px 5px -4px 1px;
}
.emote {
  width: 17px;
  height: 17px;
  margin: -4px 0 -6px 3px;
}
.emote.big {
  width: 20px;
  height: 20px;
  margin: -5px 0 -8px 1px;
}
.emote.huge {
  width: 22px;
  height: 22px;
  margin: -6px 0 -9px 1px;
}
.pink {
  color: #dc4c78;
}
.mint {
  color: #7df0cf;
}
.red {
  color: #c2103c;
}
b.orange {
  color: #f0912c;
}
.divider {
  display: flex;
  align-items: center;
  gap: 7px;
  padding: 0 0 0 3px;
  margin-right: -5px;
  color: #53fc18;
  font-size: 12px;
  font-weight: 600;
  line-height: 26px;
}
.divider::before, .divider::after {
  content: "";
  flex: 1;
  height: 1px;
  background: #318c1c;
}
.quick-emotes {
  display: flex;
  justify-content: space-between;
  padding: 0 17px 6px 6px;
}
.quick-emotes svg {
  width: 18px;
  height: 18px;
}
.composer {
  display: flex;
  align-items: center;
  padding: 0 0 9px 3px;
}
.message-box {
  flex-shrink: 0;
  width: 163px;
  height: 38px;
  padding: 0 12px;
  display: flex;
  align-items: center;
  border: 2px solid #303133;
  border-radius: 4px;
}
.message-box .mic {
  width: 12px;
  height: 18px;
}
.message-box textarea {
  flex: 1;
  width: 60px;
  margin-left: 16px;
  padding-right: 26px;
  resize: none;
  overflow: hidden;
  line-height: 13px;
}
.message-box textarea::placeholder {
  color: #8b8d90;
}
.gear {
  width: 43px;
}
.send {
  width: 47px;
  height: 26px;
  border-radius: 3px;
  background: #53fc18;
  color: #0a2a04;
  font-size: 12px;
  font-weight: 600;
}

/* taskbar */
.taskbar {
  height: 40px;
  display: grid;
  grid-template-columns: 1fr auto 1fr;
  align-items: center;
  background: linear-gradient(90deg, #f2e4da, #e9e4de 20%, #dddfda 42%, #e2ecac 54%, #e6f0a4 80%, #efeaa6);
  color: #222;
  font-size: 10px;
  line-height: 13px;
}
.weather {
  display: flex;
  gap: 5px;
  padding-left: 16px;
}
.weather span {
  color: #66625f;
}
.dock {
  display: flex;
  align-items: center;
  gap: 5px;
}
.dock button {
  width: 32px;
  height: 32px;
  border-radius: 4px;
}
.search {
  width: 182px;
  height: 26px;
  padding: 0 7px 0 9px;
  display: flex;
  align-items: center;
  gap: 8px;
  border-radius: 13px;
  background: #f7f6f3;
}
.search input {
  width: 0;
  flex: 1;
  font-size: 11px;
}
.dock .apps {
  width: 362px;
  display: flex;
  justify-content: space-between;
}
.dock .open {
  background: linear-gradient(#1d78b8, #1d78b8) center bottom / 13px 2px no-repeat, #f3f8d4;
}
.dock .obs {
  background: linear-gradient(#7c7d5a, #7c7d5a) center bottom / 5px 2px no-repeat;
}
.dock .lenovo {
  width: 20px;
  height: 20px;
  margin: 6px;
  border-radius: 0;
  background: #d01a22;
  color: #fff;
  font-size: 16px;
  font-weight: 700;
  position: relative;
}
.lenovo span {
  position: absolute;
  right: -4px;
  top: -5px;
  width: 13px;
  height: 13px;
  border-radius: 50%;
  background: #1779c4;
  font-size: 9px;
  font-weight: 400;
  line-height: 13px;
}
.tray {
  display: flex;
  align-items: center;
  justify-content: flex-end;
  gap: 11px;
  padding-right: 16px;
}
.tray > button {
  margin-right: 5px;
}
.status {
  display: flex;
  align-items: center;
  gap: 6px;
}
.tray p {
  width: 50px;
  text-align: right;
}
.line.blue {
  color: #275f96;
}
```
